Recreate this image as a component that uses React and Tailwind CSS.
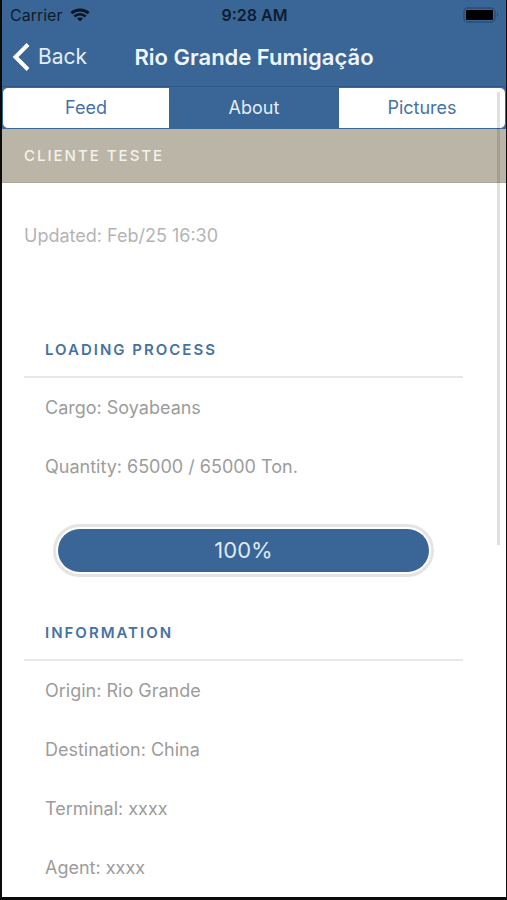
import React from "react";

const tabs = ["Feed", "About", "Pictures"];

const loading = ["Cargo: Soyabeans", "Quantity: 65000 / 65000 Ton."];

const information = [
  "Origin: Rio Grande",
  "Destination: China",
  "Terminal: xxxx",
  "Agent: xxxx",
];

function WifiIcon() {
  return (
    <svg viewBox="0 0 20 14" className="h-[14px] w-5" fill="none" stroke="#0b1622" aria-hidden="true">
      <path d="M1.4 5.2C6 .8 14 .8 18.6 5.2" strokeWidth="3" />
      <path d="M4.4 8.5c3.2-3 8-3 11.2 0" strokeWidth="2.6" />
      <path d="M10 13.6 6.9 10.5c1.8-1.5 4.4-1.5 6.2 0z" fill="#0b1622" stroke="none" />
    </svg>
  );
}

function BatteryIcon() {
  return (
    <svg viewBox="0 0 36 16" className="h-4 w-9" aria-hidden="true">
      <rect x="1" y="1" width="31" height="14" rx="4" fill="none" stroke="#2a4f78" strokeWidth="1.4" />
      <rect x="3" y="3" width="27" height="10" rx="1" fill="#000" />
      <path d="M34 6c1.6.4 1.6 3.6 0 4z" fill="#2a4f78" />
    </svg>
  );
}

function StatusBar() {
  return (
    <div className="grid h-[30px] grid-cols-3 items-center pr-[7px] pl-2 text-[#0e1d2e]">
      <div className="flex items-center gap-2 text-base">
        <span>Carrier</span>
        <WifiIcon />
      </div>
      <div className="text-center text-base font-semibold whitespace-nowrap">9:28 AM</div>
      <div className="flex justify-end">
        <BatteryIcon />
      </div>
    </div>
  );
}

function NavBar() {
  return (
    <div className="grid h-[57px] grid-cols-[1fr_auto_1fr] items-center border-b border-[#2f5a88] px-[10px] pb-[2px]">
      <button type="button" className="flex items-center gap-2 justify-self-start text-[21px] text-[#e3edf8]">
        <svg viewBox="0 0 18 28" className="h-7 w-[18px]" fill="none" stroke="#fff" strokeWidth="4" aria-hidden="true">
          <path d="M16 1.5 3.5 14 16 26.5" />
        </svg>
        Back
      </button>
      <h1 className="text-[22px] font-semibold text-[#eef5fd]">Rio Grande Fumigação</h1>
    </div>
  );
}

function Tabs() {
  return (
    <div role="tablist" className="grid h-[42px] grid-cols-3 overflow-hidden bg-[#396696] text-lg">
      {tabs.map((tab) => (
        <button
          key={tab}
          type="button"
          role="tab"
          aria-selected={tab === "About"}
          className={
            tab === "About"
              ? "border-y border-[#396696] bg-[#396696] text-[#e3edf8]"
              : "border border-[#396696] bg-white text-[#4672a3] first:rounded-l-md last:rounded-r-md"
          }
        >
          {tab}
        </button>
      ))}
    </div>
  );
}

function Section({ title, rows, children }) {
  return (
    <section>
      <h2 className="border-b-2 border-[#e8e8e8] px-[21px] text-[15px] leading-[52px] font-semibold tracking-[2px] text-[#4672a3]">
        {title}
      </h2>
      {rows.map((row) => (
        <p key={row} className="px-[21px] text-lg leading-[59px] text-[#9c9c9c]">
          {row}
        </p>
      ))}
      {children}
    </section>
  );
}

function Progress({ value }) {
  return (
    <div
      role="progressbar"
      aria-label="Loading process"
      aria-valuenow={value}
      aria-valuemin={0}
      aria-valuemax={100}
      className="mx-[29px] mt-7 mb-[30px] rounded-full border-[3px] border-[#e4e4e4] p-[2px]"
    >
      <div
        className="rounded-full bg-[#396696] text-center text-[22px] leading-[43px] text-[#dfe9f5]"
        style={{ width: `${value}%` }}
      >
        {value}%
      </div>
    </div>
  );
}

export default function App() {
  return (
    <div className="relative flex min-h-screen flex-col border-r border-b-[3px] border-l-2 border-[#0b0b0b] bg-white font-['Inter','Liberation_Sans',sans-serif]">
      <header className="bg-[#396696]">
        <StatusBar />
        <NavBar />
        <Tabs />
      </header>
      <main className="flex-1">
        <div className="border-b border-[#aca798] bg-[#bab5a7] px-[22px] text-[15px] leading-[53px] font-medium tracking-[2px] text-[#f4f2ea]">
          CLIENTE TESTE
        </div>
        <div className="pr-[43px] pl-[22px]">
          <p className="mt-[23px] mb-[59px] text-lg leading-[59px] text-[#b4b4b4]">Updated: Feb/25 16:30</p>
          <Section title="LOADING PROCESS" rows={loading}>
            <Progress value={100} />
          </Section>
          <Section title="INFORMATION" rows={information} />
        </div>
      </main>
      <div className="absolute top-[92px] right-[6px] h-[453px] w-[3px] bg-black/12" />
    </div>
  );
}
